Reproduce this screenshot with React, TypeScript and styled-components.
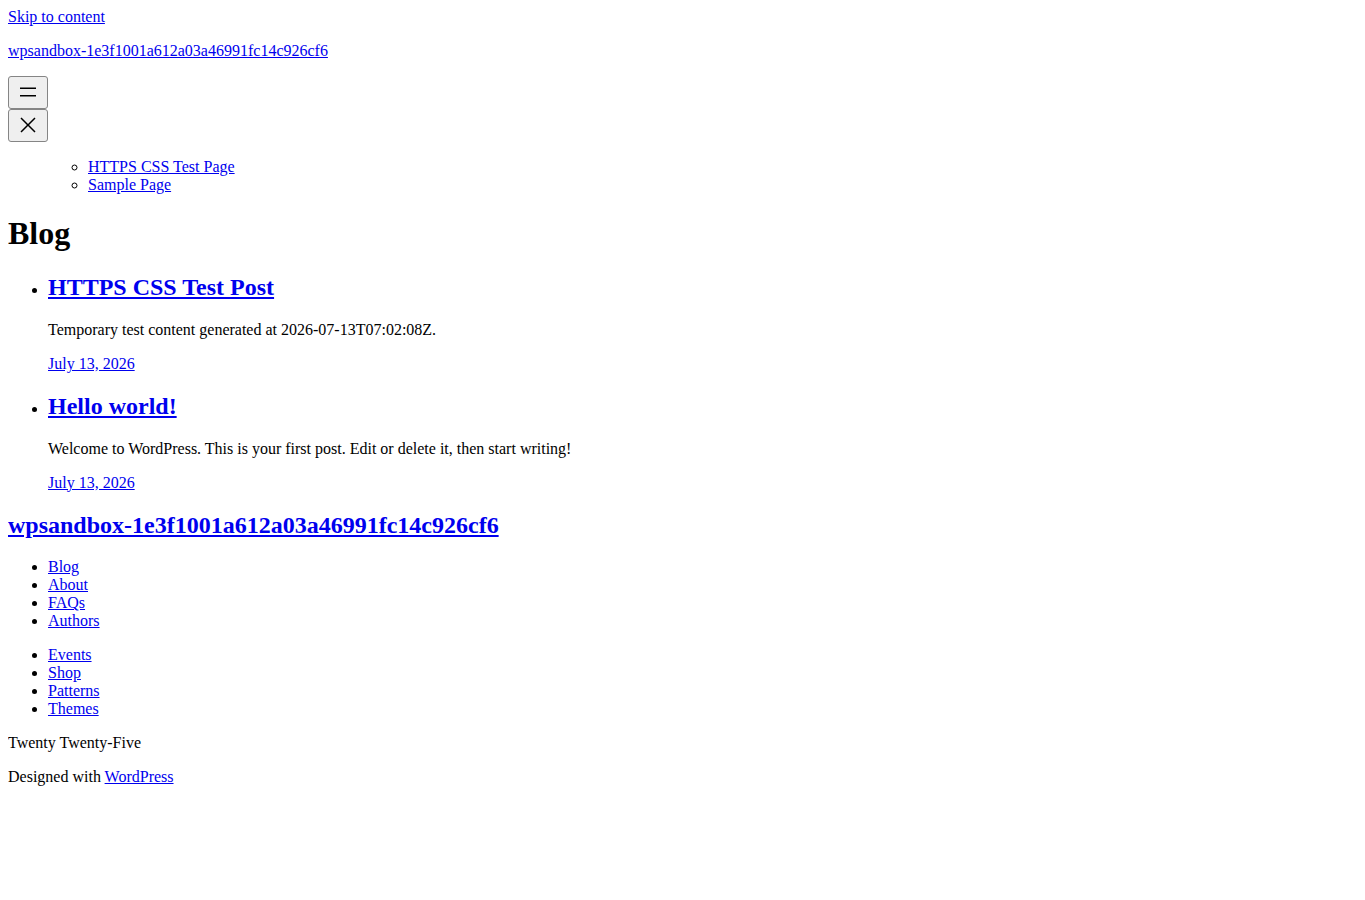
import React from 'react';
import styled, { createGlobalStyle } from 'styled-components';

const GlobalStyle = createGlobalStyle`
  body {
    margin: 8px;
    background: #ffffff;
    color: #000000;
    font-family: "Liberation Serif", "Times New Roman", serif;
    font-size: 16px;
  }
`;

const Link = styled.a`
  color: #0000ee;
  text-decoration: underline;
`;

const SkipLink = styled(Link)``;

const SiteTitle = styled.p`
  margin: 16px 0;
`;

const MenuButton = styled.button`
  display: block;
  box-sizing: border-box;
  width: 40px;
  height: 33px;
  padding: 3px 7px 4px;
  background: #efefef;
  border: 1px solid #858585;
  border-radius: 3px;
  color: #000000;

  svg {
    display: block;
    width: 24px;
    height: 24px;
    fill: currentColor;
  }
`;

const NavList = styled.ul`
  margin: 16px 0;
  padding-left: 40px;
  list-style: none;
`;

const SubList = styled.ul`
  margin: 0;
  padding-left: 40px;
  list-style: circle;
`;

const PageTitle = styled.h1`
  font-size: 32px;
  margin: 21.44px 0;
  font-weight: bold;
`;

const PostList = styled.ul`
  margin: 16px 0;
  padding-left: 40px;
  list-style: disc;
`;

const PostTitle = styled.h2`
  font-size: 24px;
  margin: 19.92px 0;
  font-weight: bold;
`;

const Excerpt = styled.p`
  margin: 16px 0;
`;

const PostDate = styled.div``;

const FooterTitle = styled.h2`
  font-size: 24px;
  margin: 19.92px 0;
  font-weight: bold;
`;

const FooterMenu = styled.ul`
  margin: 16px 0;
  padding-left: 40px;
  list-style: disc;
`;

const Credit = styled.p`
  margin: 16px 0;
`;

const OpenIcon = () => (
  <svg viewBox="0 0 24 24" aria-hidden="true">
    <path d="M4 7.5h16v1.5H4z" />
    <path d="M4 15h16v1.5H4z" />
  </svg>
);

const CloseIcon = () => (
  <svg viewBox="0 0 24 24" aria-hidden="true">
    <path d="m13.06 12 6.47-6.47-1.06-1.06L12 10.94 5.53 4.47 4.47 5.53 10.94 12l-6.47 6.47 1.06 1.06L12 13.06l6.47 6.47 1.06-1.06L13.06 12Z" />
  </svg>
);

const siteName = 'wpsandbox-1e3f1001a612a03a46991fc14c926cf6';

const posts = [
  {
    id: 1,
    title: 'HTTPS CSS Test Post',
    excerpt: 'Temporary test content generated at 2026-07-13T07:02:08Z.',
    date: 'July 13, 2026',
  },
  {
    id: 2,
    title: 'Hello world!',
    excerpt: 'Welcome to WordPress. This is your first post. Edit or delete it, then start writing!',
    date: 'July 13, 2026',
  },
];

const footerMenus = [
  ['Blog', 'About', 'FAQs', 'Authors'],
  ['Events', 'Shop', 'Patterns', 'Themes'],
];

const App: React.FC = () => {
  return (
    <>
      <GlobalStyle />
      <SkipLink href="#content">Skip to content</SkipLink>
      <header>
        <SiteTitle>
          <Link href="#">{siteName}</Link>
        </SiteTitle>
        <nav>
          <MenuButton aria-label="Open menu">
            <OpenIcon />
          </MenuButton>
          <div>
            <MenuButton aria-label="Close menu">
              <CloseIcon />
            </MenuButton>
            <NavList>
              <SubList>
                <li><Link href="#">HTTPS CSS Test Page</Link></li>
                <li><Link href="#">Sample Page</Link></li>
              </SubList>
            </NavList>
          </div>
        </nav>
      </header>

      <main id="content">
        <PageTitle>Blog</PageTitle>
        <PostList>
          {posts.map(post => (
            <li key={post.id}>
              <PostTitle>
                <Link href="#">{post.title}</Link>
              </PostTitle>
              <Excerpt>{post.excerpt}</Excerpt>
              <PostDate>
                <Link href="#">{post.date}</Link>
              </PostDate>
            </li>
          ))}
        </PostList>
      </main>

      <footer>
        <FooterTitle>
          <Link href="#">{siteName}</Link>
        </FooterTitle>
        {footerMenus.map((menu, i) => (
          <FooterMenu key={i}>
            {menu.map(item => (
              <li key={item}><Link href="#">{item}</Link></li>
            ))}
          </FooterMenu>
        ))}
        <Credit>Twenty Twenty-Five</Credit>
        <Credit>
          Designed with <Link href="#">WordPress</Link>
        </Credit>
      </footer>
    </>
  );
};

export default App;
